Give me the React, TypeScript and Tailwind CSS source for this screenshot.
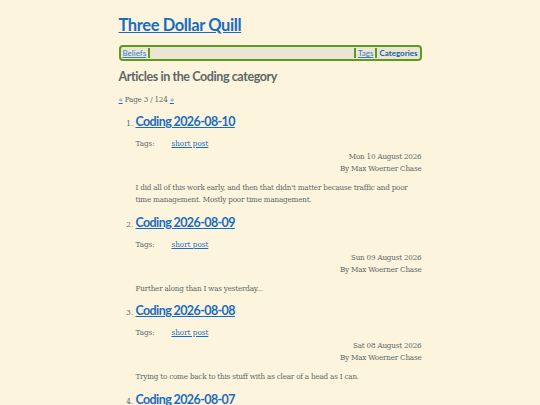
import React from "react";

const items = [
  {
    n: 1,
    title: "Coding 2026-08-10",
    date: "Mon 10 August 2026",
    summary:
      "I did all of this work early, and then that didn't matter because traffic and poor time management. Mostly poor time management.",
  },
  {
    n: 2,
    title: "Coding 2026-08-09",
    date: "Sun 09 August 2026",
    summary: "Further along than I was yesterday...",
  },
  {
    n: 3,
    title: "Coding 2026-08-08",
    date: "Sat 08 August 2026",
    summary: "Trying to come back to this stuff with as clear of a head as I can.",
  },
  {
    n: 4,
    title: "Coding 2026-08-07",
    date: "Fri 07 August 2026",
    summary: "More work.",
  },
];

const head = { fontFamily: 'Lato, "Open Sans", sans-serif' };
const body = { fontFamily: '"DejaVu Serif Condensed", "DejaVu Serif", serif', fontStretch: "condensed" as const };

export default function App() {
  return (
    <div className="min-h-screen bg-[#fcf4dc] text-[#5e6969]" style={body}>
      <div className="mx-auto w-[303px] pt-[13px]">
        <h1 className="text-[16.5px] font-bold leading-[24px] tracking-[-0.4px]" style={head}>
          <a href="#" className="text-[#1a6cc2] underline">
            Three Dollar Quill
          </a>
        </h1>
        <nav
          className="mt-[8px] flex h-[16px] items-center rounded-[4px] border-[2.5px] border-[#5e9a22] bg-[#ebe5d3] px-[2px] text-[8px] leading-none"
          style={head}
        >
          <a href="#" className="text-[#3b7fc4] underline">
            Beliefs
          </a>
          <span className="ml-[2px] h-[10px] w-[2px] bg-[#5e9a22]" />
          <span className="flex-1" />
          <span className="mr-[2px] h-[10px] w-[2px] bg-[#5e9a22]" />
          <a href="#" className="text-[#3b7fc4] underline">
            Tags
          </a>
          <span className="mx-[2px] h-[10px] w-[2px] bg-[#5e9a22]" />
          <span className="font-bold text-[#1c5fa8]">Categories</span>
        </nav>
        <h2
          className="mt-[8px] text-[12.5px] font-bold leading-[16px] tracking-[-0.4px] text-[#5d6868]"
          style={head}
        >
          Articles in the Coding category
        </h2>
        <p className="mt-[10px] text-[8px] leading-[10px] tracking-[-0.2px]">
          <a href="#" className="text-[#1a6cc2] underline">
            «
          </a>{" "}
          Page 3 / 124{" "}
          <a href="#" className="text-[#1a6cc2] underline">
            »
          </a>
        </p>
        <ol className="mt-[8px] list-decimal pl-[17px] text-[8px]">
          {items.map((it) => (
            <li key={it.n} className="mb-[7.5px]">
              <h3
                className="inline text-[12.5px] font-bold leading-[18px] tracking-[-0.6px]"
                style={head}
              >
                <a href="#" className="text-[#1a6cc2] underline">
                  {it.title}
                </a>
              </h3>
              <div className="mt-[7px] mb-[1px] flex text-[8px] leading-[12px]">
                <span className="w-[36px]">Tags:</span>
                <a href="#" className="text-[#1a6cc2] underline">
                  short post
                </a>
              </div>
              <div className="text-right text-[8px] leading-[12px] tracking-[-0.2px]">
                <div>{it.date}</div>
                <div>By Max Woerner Chase</div>
              </div>
              <p className="mt-[7px] text-[8px] leading-[12px] tracking-[-0.2px]">{it.summary}</p>
            </li>
          ))}
        </ol>
      </div>
    </div>
  );
}
